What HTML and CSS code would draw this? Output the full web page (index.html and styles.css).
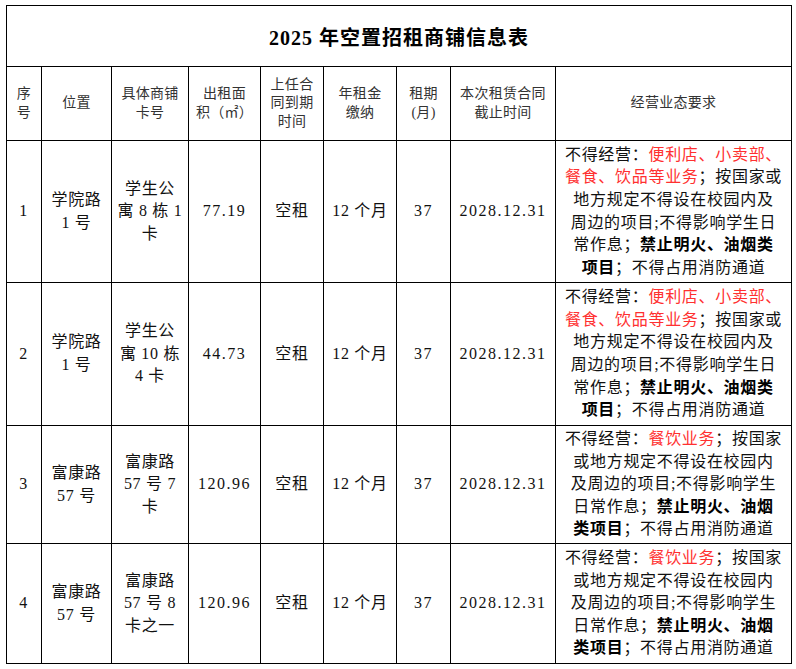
FILE: index.html
```html
<!DOCTYPE html>
<html lang="zh-CN">
<head>
<meta charset="utf-8">
<title>2025年空置招租商铺信息表</title>
<link rel="stylesheet" href="styles.css">
</head>
<body>
<table class="sheet">
  <colgroup>
    <col class="c1"><col class="c2"><col class="c3"><col class="c4"><col class="c5">
    <col class="c6"><col class="c7"><col class="c8"><col class="c9">
  </colgroup>
  <tr class="title-row"><td colspan="9" class="title">2025 年空置招租商铺信息表</td></tr>
  <tr class="head-row">
    <th>序<br>号</th>
    <th>位置</th>
    <th>具体商铺<br>卡号</th>
    <th>出租面<br>积（㎡）</th>
    <th>上任合<br>同到期<br>时间</th>
    <th>年租金<br>缴纳</th>
    <th>租期<br>(月)</th>
    <th>本次租赁合同<br>截止时间</th>
    <th>经营业态要求</th>
  </tr>
  <tr class="r1">
    <td class="num">1</td>
    <td>学院路<br>1 号</td>
    <td>学生公<br>寓 8 栋 1<br>卡</td>
    <td class="num">77.19</td>
    <td>空租</td>
    <td>12 个月</td>
    <td class="num">37</td>
    <td class="num">2028.12.31</td>
    <td class="req">不得经营：<span class="red">便利店、小卖部、</span><br><span class="red">餐食、饮品等业务</span>；按国家或<br>地方规定不得设在校园内及<br>周边的项目;不得影响学生日<br>常作息；<b>禁止明火、油烟类</b><br><b>项目</b>；不得占用消防通道</td>
  </tr>
  <tr class="r2">
    <td class="num">2</td>
    <td>学院路<br>1 号</td>
    <td>学生公<br>寓 10 栋<br>4 卡</td>
    <td class="num">44.73</td>
    <td>空租</td>
    <td>12 个月</td>
    <td class="num">37</td>
    <td class="num">2028.12.31</td>
    <td class="req">不得经营：<span class="red">便利店、小卖部、</span><br><span class="red">餐食、饮品等业务</span>；按国家或<br>地方规定不得设在校园内及<br>周边的项目;不得影响学生日<br>常作息；<b>禁止明火、油烟类</b><br><b>项目</b>；不得占用消防通道</td>
  </tr>
  <tr class="r3">
    <td class="num">3</td>
    <td>富康路<br>57 号</td>
    <td>富康路<br>57 号 7<br>卡</td>
    <td class="num">120.96</td>
    <td>空租</td>
    <td>12 个月</td>
    <td class="num">37</td>
    <td class="num">2028.12.31</td>
    <td class="req">不得经营：<span class="red">餐饮业务</span>；按国家<br>或地方规定不得设在校园内<br>及周边的项目;不得影响学生<br>日常作息；<b>禁止明火、油烟</b><br><b>类项目</b>；不得占用消防通道</td>
  </tr>
  <tr class="r4">
    <td class="num">4</td>
    <td>富康路<br>57 号</td>
    <td>富康路<br>57 号 8<br>卡之一</td>
    <td class="num">120.96</td>
    <td>空租</td>
    <td>12 个月</td>
    <td class="num">37</td>
    <td class="num">2028.12.31</td>
    <td class="req">不得经营：<span class="red">餐饮业务</span>；按国家<br>或地方规定不得设在校园内<br>及周边的项目;不得影响学生<br>日常作息；<b>禁止明火、油烟</b><br><b>类项目</b>；不得占用消防通道</td>
  </tr>
</table>
</body>
</html>
```
FILE: styles.css
```css
html, body {
  margin: 0;
  padding: 0;
  background: #fff;
}

body {
  padding: 5px 0 0 6px;
  font-family: "Liberation Serif", "Noto Sans CJK SC", serif;
  color: #111;
}

.sheet {
  border-collapse: collapse;
  table-layout: fixed;
  width: 786px;
}

.c1 { width: 35px; }
.c2 { width: 70px; }
.c3 { width: 77px; }
.c4 { width: 72px; }
.c5 { width: 63px; }
.c6 { width: 73px; }
.c7 { width: 54px; }
.c8 { width: 105px; }
.c9 { width: 236px; }

.sheet td,
.sheet th {
  border: 1px solid #000;
  padding: 0;
  text-align: center;
  vertical-align: middle;
  white-space: nowrap;
  overflow: hidden;
}

.title-row { height: 61px; }
.title {
  font-size: 20px;
  font-weight: bold;
  letter-spacing: 1px;
  color: #000;
}

.head-row { height: 74px; }
.sheet th {
  font-weight: normal;
  font-size: 14px;
  line-height: 18.5px;
  letter-spacing: 0.3px;
  color: #333;
}

.r1 { height: 142px; }
.r2 { height: 143px; }
.r3 { height: 118px; }
.r4 { height: 120px; }

.r1 td, .r2 td, .r3 td, .r4 td {
  font-size: 16px;
  line-height: 22.6px;
  letter-spacing: 0.7px;
}

.sheet td.num {
  letter-spacing: 1.5px;
}

.req b {
  font-weight: bold;
  color: #000;
}

.red {
  color: #ff3030;
}
```
